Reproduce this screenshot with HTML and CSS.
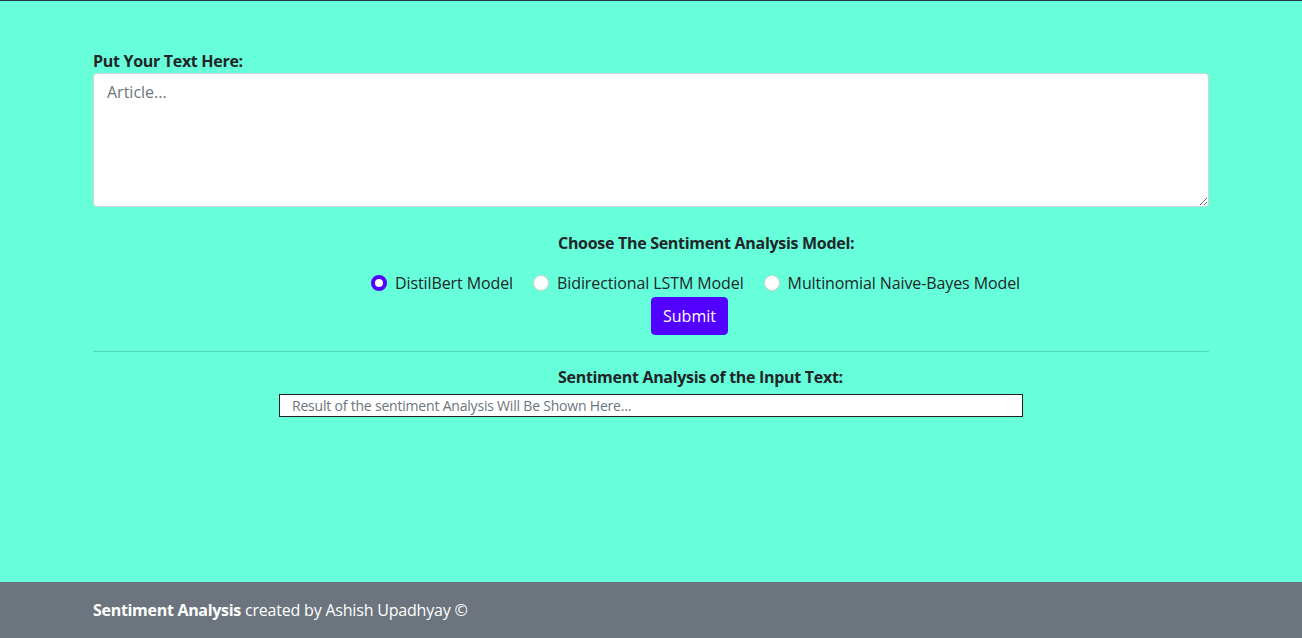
FILE: index.html
```html
<!DOCTYPE html>
<html lang="en">
<head>
<meta charset="utf-8">
<title>Sentiment Analysis</title>
<link rel="stylesheet" href="styles.css">
</head>
<body>
<div class="topline"></div>
<main class="main">
  <div class="container">
    <form class="form">
      <label class="label" for="article">Put Your Text Here:</label>
      <textarea id="article" class="textarea" placeholder="Article..."></textarea>
      <h6 class="heading choose">Choose The Sentiment Analysis Model:</h6>
      <div class="radios">
        <label class="radio"><input type="radio" name="model" checked> DistilBert Model</label>
        <label class="radio"><input type="radio" name="model"> Bidirectional LSTM Model</label>
        <label class="radio"><input type="radio" name="model"> Multinomial Naive-Bayes Model</label>
      </div>
      <div class="submit-row"><button type="button" class="btn">Submit</button></div>
    </form>
    <hr class="divider">
    <h6 class="heading result-heading">Sentiment Analysis of the Input Text:</h6>
    <div class="result">Result of the sentiment Analysis Will Be Shown Here...</div>
  </div>
</main>
<footer class="footer">
  <div class="container"><b>Sentiment Analysis</b> created by Ashish Upadhyay ©</div>
</footer>
</body>
</html>
```
FILE: styles.css
```css
* { box-sizing: border-box; }
html, body { margin: 0; padding: 0; }
body {
  font-family: "Open Sans", "Noto Sans", sans-serif;
  font-size: 16px;
  line-height: 24px;
  letter-spacing: -0.2px;
  color: #212529;
  background: #66ffda;
  min-height: 100vh;
  display: flex;
  flex-direction: column;
}
.topline { height: 1px; background: #1f3d3a; }
.main { flex: 1; padding-top: 48px; }
.container { width: 1140px; margin: 0 auto; padding: 0 12px; }
.form { display: flex; flex-direction: column; }
.label { font-weight: 700; display: block; letter-spacing: -0.3px; }
.textarea {
  display: block;
  width: 100%;
  height: 134px;
  border: 1px solid #ced4da;
  border-radius: 4px;
  padding: 6px 13px;
  font: inherit;
  font-size: 16px;
  color: #495057;
  resize: vertical;
}
.textarea::placeholder { color: #6c757d; }
.heading { font-size: 16px; font-weight: 700; margin: 0; line-height: 24px; letter-spacing: -0.3px; }
.choose { margin: 24px 0 0 465px; }
.radios { display: flex; gap: 20px; margin: 16px 0 0 278px; letter-spacing: -0.1px; }
.radio { display: flex; align-items: center; gap: 8px; }
.radio input {
  appearance: none;
  -webkit-appearance: none;
  width: 16px;
  height: 16px;
  margin: 0;
  border-radius: 50%;
  background: #fff;
  border: 1px solid #cfcfcf;
}
.radio input:checked {
  border: 4px solid #5200ff;
  background: #fff;
}
.submit-row { display: flex; margin: 2px 0 0 558px; }
.btn {
  background: #5200ff;
  color: #fff;
  border: 1px solid #5200ff;
  border-radius: 4px;
  height: 38px;
  padding: 0 11px;
  font: inherit;
  font-size: 16px;
}
.divider { border: 0; border-top: 1px solid #4fd9b6; margin: 16px 0 13px; }
.result-heading { margin-left: 465px; }
.result {
  margin: 5px auto 0;
  width: 744px;
  height: 23px;
  background: #fff;
  border: 1px solid #222;
  font-size: 14px;
  line-height: 21px;
  padding: 0 12px;
  color: #6c757d;
}
.footer {
  height: 56px;
  background: #6c757d;
  color: #fff;
  display: flex;
  align-items: center;
}
.footer b { letter-spacing: -0.3px; }
```
